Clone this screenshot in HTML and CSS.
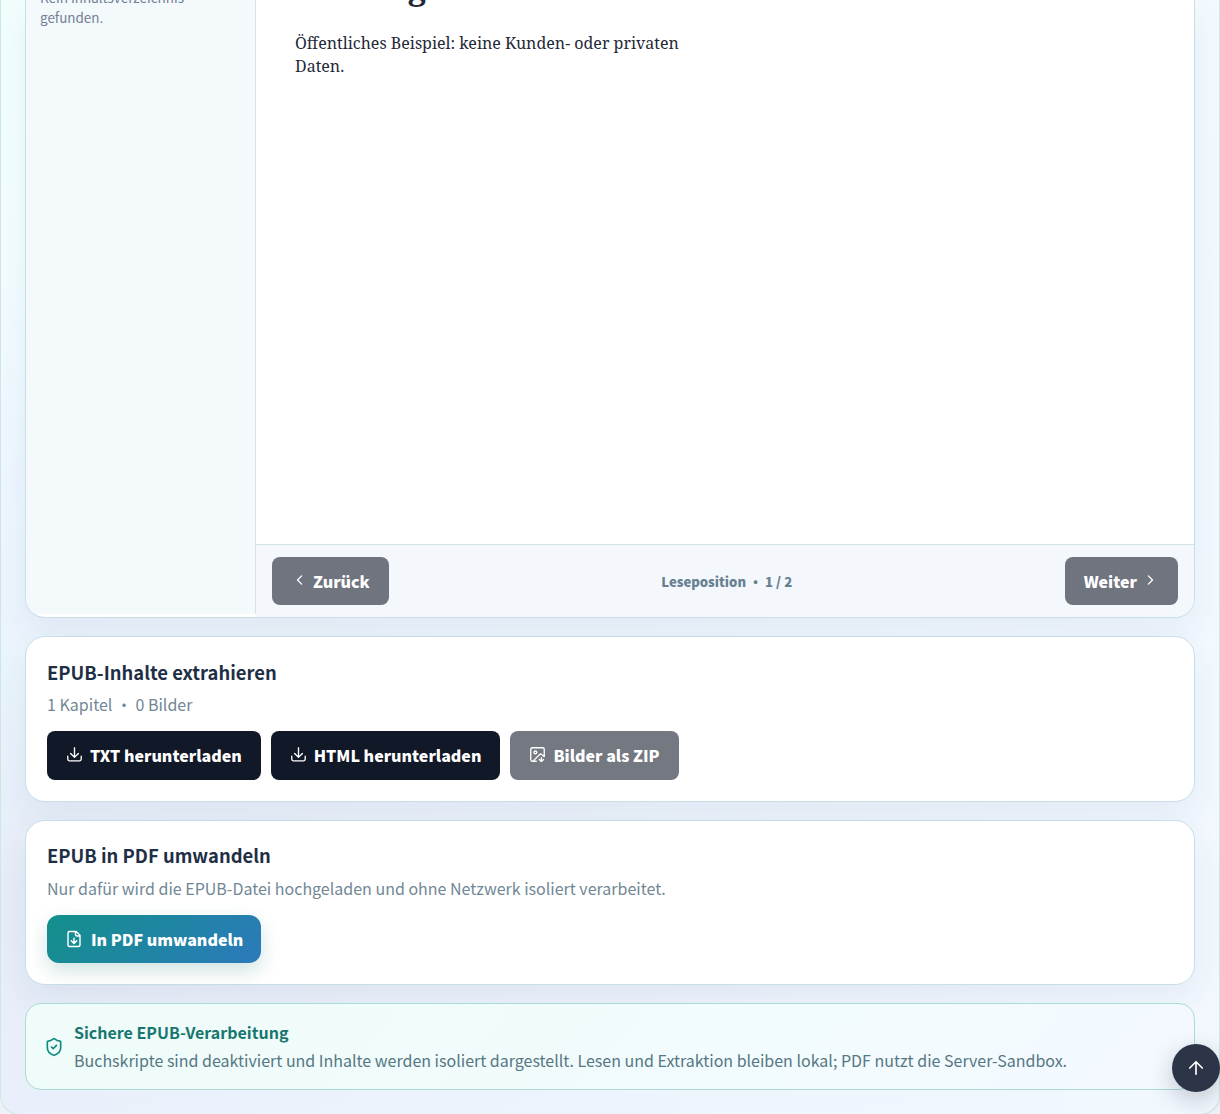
FILE: index.html
```html
<!DOCTYPE html>
<html lang="de">
<head>
<meta charset="utf-8">
<title>EPUB-Reader</title>
<link rel="stylesheet" href="styles.css">
</head>
<body>
<main class="workspace">
  <section class="reader">
    <aside class="toc"><p>Kein Inhaltsverzeichnis gefunden.</p></aside>
    <div class="book">
      <article class="page">
        <h1>Einstieg</h1>
        <p>Öffentliches Beispiel: keine Kunden- oder privaten Daten.</p>
      </article>
      <nav class="pager">
        <button class="btn muted prev"><svg class="chev" viewBox="0 0 24 24"><path d="M15.500 6.500L10 12l5.500 5.500"/></svg>Zurück</button>
        <span class="position">Leseposition • 1 / 2</span>
        <button class="btn muted next">Weiter<svg class="chev" viewBox="0 0 24 24"><path d="M8.500 6.500L14 12l-5.500 5.500"/></svg></button>
      </nav>
    </div>
  </section>

  <section class="card extract">
    <h2>EPUB-Inhalte extrahieren</h2>
    <p>1 Kapitel • 0 Bilder</p>
    <div class="actions">
      <button class="btn"><svg class="icon" viewBox="0 0 24 24"><path d="M2.500 14.500V18.500A2.500 2.500 0 0 0 5 21h14a2.500 2.500 0 0 0 2.500-2.500V14.500M12 2.500v13M6.500 10.500l5.500 5.500 5.500-5.500"/></svg>TXT herunterladen</button>
      <button class="btn"><svg class="icon" viewBox="0 0 24 24"><path d="M2.500 14.500V18.500A2.500 2.500 0 0 0 5 21h14a2.500 2.500 0 0 0 2.500-2.500V14.500M12 2.500v13M6.500 10.500l5.500 5.500 5.500-5.500"/></svg>HTML herunterladen</button>
      <button class="btn muted"><svg class="icon" viewBox="0 0 24 24"><path d="M10.300 21.500H4.500a2 2 0 0 1-2-2v-15a2 2 0 0 1 2-2h15a2 2 0 0 1 2 2v10.500l-3.600-3.100a2 2 0 0 0-2.800 0L6 21M17.500 22v-5.500M14.500 19l3 3 3-3"/><circle cx="9" cy="9" r="2"/></svg>Bilder als ZIP</button>
    </div>
  </section>

  <section class="card convert">
    <h2>EPUB in PDF umwandeln</h2>
    <p>Nur dafür wird die EPUB-Datei hochgeladen und ohne Netzwerk isoliert verarbeitet.</p>
    <button class="btn primary"><svg class="icon" viewBox="0 0 24 24"><path d="M15 2H6a2 2 0 0 0-2 2v16a2 2 0 0 0 2 2h12a2 2 0 0 0 2-2V7zM14 2v4a2 2 0 0 0 2 2h4M12 11v7M8.500 14.500l3.500 3.500 3.500-3.500"/></svg>In PDF umwandeln</button>
  </section>

  <section class="notice">
    <svg class="shield" viewBox="0 0 24 24"><path d="M20 13c0 5-3.500 7.500-7.660 8.950a1 1 0 0 1-.67-.01C7.500 20.500 4 18 4 13V6a1 1 0 0 1 1-1c2 0 4.500-1.200 6.240-2.720a1.170 1.170 0 0 1 1.520 0C14.510 3.810 17 5 19 5a1 1 0 0 1 1 1zM9 12l2 2 4-4"/></svg>
    <div><h3>Sichere EPUB-Verarbeitung</h3>
    <p>Buchskripte sind deaktiviert und Inhalte werden isoliert dargestellt. Lesen und Extraktion bleiben lokal; PDF nutzt die Server-Sandbox.</p></div>
  </section>
</main>
<button class="to-top" aria-label="Nach oben"><svg viewBox="0 0 24 24"><path d="M12 19.500V4.500M4.500 12L12 4.500l7.500 7.500"/></svg></button>
</body>
</html>
```
FILE: styles.css
```css
* { box-sizing: border-box; }
body {
  margin: 0;
  height: 1114px;
  overflow: hidden;
  background: #eef2f7;
  color: #1e2f45;
  font-family: "Noto Sans CJK SC", "Noto Sans", sans-serif;
}
h1, h2, h3, p { margin: 0; }
svg { fill: none; stroke: currentColor; stroke-linecap: round; stroke-linejoin: round; flex: none; }

.workspace {
  height: 1115px;
  padding: 0 24px;
  display: flex;
  flex-direction: column;
  gap: 18px;
  border: 1px solid #cde8e4;
  border-top: 0;
  border-radius: 0 0 20px 20px;
  background: linear-gradient(90deg, rgba(243, 249, 255, 0) 0%, rgba(243, 249, 255, .9) 100%), linear-gradient(180deg, #f2fefe 0, #f3fdff 260px, #eef6ff 480px, #eaf4fc 680px, #e6ecf8 900px, #e9f0fb 100%);
}
.reader, .card { border: 1px solid #c9dfe7; box-shadow: 0 14px 34px rgba(30, 58, 110, .065); }
.reader {
  height: 618px;
  flex: none;
  display: grid;
  grid-template-columns: 230px 1fr;
  border-top: 0;
  border-radius: 0 0 20px 20px;
  overflow: hidden;
  background: #fff;
}
.toc {
  margin-bottom: 3px;
  padding: 0 14px;
  border-right: 1px solid #d2e6e9;
  background: #f4f9fc;
  color: #718096;
  font-size: 13.440px;
  line-height: 20px;
}
.toc p { width: 160px; margin-top: -13px; }
.book { display: flex; flex-direction: column; min-height: 0; }
.page {
  height: 544px;
  padding: 0 39px;
  color: #1f2937;
  font: 16px/23px "Noto Serif", "Droid Serif", "DejaVu Serif", serif;
}
.page h1 { margin-top: -35px; font-size: 32px; line-height: 44px; letter-spacing: .3px; white-space: nowrap; }
.page p { width: 390px; margin-top: 23px; }
.pager {
  flex: 1;
  display: flex;
  align-items: center;
  justify-content: space-between;
  padding: 0 16px;
  border-top: 1px solid #cfe3e8;
  background: #f4f7fc;
}
.position { color: #668091; font-size: 13.120px; font-weight: 800; }

.btn {
  display: inline-flex;
  align-items: center;
  height: 49px;
  padding: 0 19px 2px;
  gap: 7px;
  border: 0;
  border-radius: 8px;
  background: #111827;
  color: #fff;
  font: 800 16px/24px "Noto Sans CJK SC", "Noto Sans", sans-serif;
  white-space: nowrap;
}
.muted { background: #747881; }
.pager .muted { height: 48px; padding-bottom: 0; background: #6f747f; }
.icon { width: 17px; height: 17px; stroke-width: 1.900; }
.chev { width: 18px; height: 18px; stroke-width: 1.800; margin-bottom: 3px; }
.prev .chev { margin: 0 -2px 3px -1px; }
.next .chev { margin: 0 -1px 3px -2px; }

.card { flex: none; padding: 20px 21px; border-radius: 20px; background: #fff; }
.card h2 { font-size: 18.400px; line-height: 30px; font-weight: 700; }
.card p { color: #718795; font-size: 16px; line-height: 26px; margin-top: 4px; }
.extract { height: 166px; }
.actions { display: flex; gap: 10px; margin-top: 14px; }
.convert { height: 165px; padding-top: 19px; }
.convert p { margin-top: 5px; }
.primary {
  width: 214px;
  height: 48px;
  margin-top: 14px;
  padding: 0 18px;
  gap: 8px;
  border-radius: 12px;
  background: linear-gradient(135deg, #12908a, #2c7abb);
  box-shadow: 0 8px 20px rgba(15, 118, 110, .2);
}
.primary .icon { width: 18px; height: 18px; }

.notice {
  height: 87px;
  flex: none;
  display: flex;
  align-items: center;
  gap: 10px;
  padding: 0 18px;
  border: 1px solid #a9ddd3;
  border-radius: 16px;
  background: linear-gradient(135deg, #effcf9, #f3fbff 80%, #f3f8ff);
}
.notice div { padding-bottom: 2px; }
.shield { width: 20px; height: 20px; stroke-width: 2; color: #0f8b82; }
.notice h3 { color: #17766e; font-size: 16px; line-height: 28px; }
.notice p { color: #557783; font-size: 16px; line-height: 28px; white-space: nowrap; }

.to-top {
  position: fixed;
  right: 0;
  top: 1044px;
  width: 48px;
  height: 48px;
  display: grid;
  place-items: center;
  padding: 0;
  border: 0;
  border-radius: 50%;
  background: #2c3547;
  color: #fff;
  box-shadow: 0 8px 24px rgba(17, 24, 39, .22);
}
.to-top svg { width: 20px; height: 20px; stroke-width: 2; }
```
